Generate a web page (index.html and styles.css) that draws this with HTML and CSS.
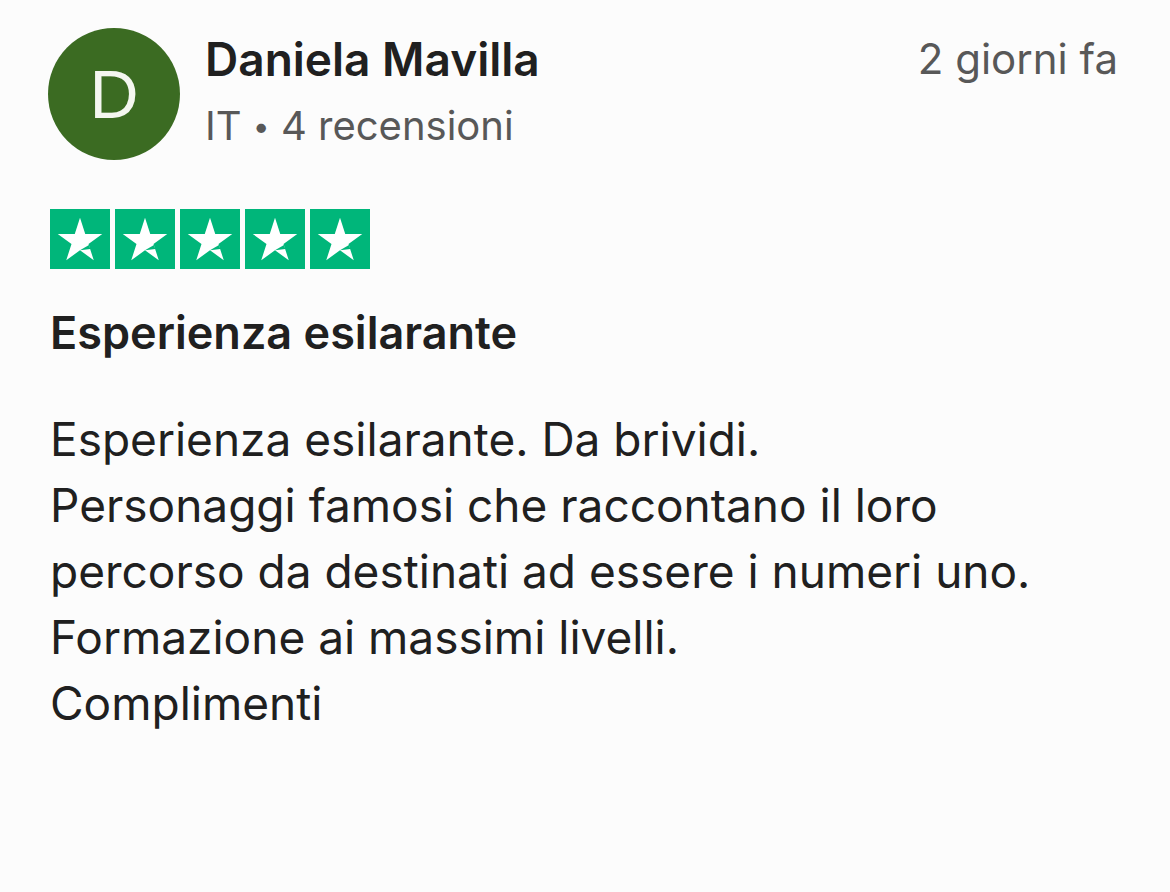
FILE: index.html
```html
<!DOCTYPE html>
<html lang="it">
<head>
    <meta charset="UTF-8">
    <title>Recensione</title>
    <link rel="stylesheet" href="styles.css">
</head>
<body>
    <!-- Review card -->
    <div class="review">
        <div class="review-head">
            <div class="avatar">D</div>
            <div class="author">
                <div class="author-name">Daniela Mavilla</div>
                <div class="author-meta">IT <span class="dot">&bull;</span> 4 recensioni</div>
            </div>
            <div class="date">2 giorni fa</div>
        </div>

        <!-- Stars -->
        <div class="stars">
            <span class="star"><svg viewBox="0 0 24 24"><path d="M12 3.5l2.1 6.5h6.8l-5.5 4 2.1 6.5L12 16.5l-5.5 4 2.1-6.5-5.5-4h6.8z" fill="#fff"/><path d="M15.6 14.4l.5 1.6-4.1 .5z" fill="#00b67a"/></svg></span>
            <span class="star"><svg viewBox="0 0 24 24"><path d="M12 3.5l2.1 6.5h6.8l-5.5 4 2.1 6.5L12 16.5l-5.5 4 2.1-6.5-5.5-4h6.8z" fill="#fff"/><path d="M15.6 14.4l.5 1.6-4.1 .5z" fill="#00b67a"/></svg></span>
            <span class="star"><svg viewBox="0 0 24 24"><path d="M12 3.5l2.1 6.5h6.8l-5.5 4 2.1 6.5L12 16.5l-5.5 4 2.1-6.5-5.5-4h6.8z" fill="#fff"/><path d="M15.6 14.4l.5 1.6-4.1 .5z" fill="#00b67a"/></svg></span>
            <span class="star"><svg viewBox="0 0 24 24"><path d="M12 3.5l2.1 6.5h6.8l-5.5 4 2.1 6.5L12 16.5l-5.5 4 2.1-6.5-5.5-4h6.8z" fill="#fff"/><path d="M15.6 14.4l.5 1.6-4.1 .5z" fill="#00b67a"/></svg></span>
            <span class="star"><svg viewBox="0 0 24 24"><path d="M12 3.5l2.1 6.5h6.8l-5.5 4 2.1 6.5L12 16.5l-5.5 4 2.1-6.5-5.5-4h6.8z" fill="#fff"/><path d="M15.6 14.4l.5 1.6-4.1 .5z" fill="#00b67a"/></svg></span>
        </div>

        <h3 class="review-title">Esperienza esilarante</h3>

        <p class="review-text">
            Esperienza esilarante. Da brividi.<br>
            Personaggi famosi che raccontano il loro<br>
            percorso da destinati ad essere i numeri uno.<br>
            Formazione ai massimi livelli.<br>
            Complimenti
        </p>
    </div>
</body>
</html>
```

FILE: styles.css
```css
/* General */
body {
    margin: 0;
    padding: 0;
    background-color: #fcfcfc;
    font-family: Inter, "Noto Sans", sans-serif;
    color: #202020;
}

.review {
    padding: 28px 52px 0 48px;
}

/* Header */
.review-head {
    display: flex;
    align-items: flex-start;
}

.avatar {
    width: 132px;
    height: 132px;
    border-radius: 50%;
    background-color: #3b6b22;
    color: #f4f7f0;
    font-family: "Liberation Sans", Arial, sans-serif;
    font-size: 68px;
    display: flex;
    align-items: center;
    justify-content: center;
    flex-shrink: 0;
}

.author {
    margin-left: 25px;
    flex: 1;
}

.author-name {
    font-size: 46px;
    font-weight: 600;
    line-height: 62px;
}

.author-meta {
    font-size: 40px;
    color: #585858;
    line-height: 72px;
}

.dot {
    font-size: 30px;
    vertical-align: 3px;
}

.date {
    font-size: 42px;
    color: #585858;
    line-height: 62px;
}

/* Stars */
.stars {
    display: flex;
    gap: 5px;
    margin-top: 47px;
    margin-left: 2px;
}

.star {
    width: 60px;
    height: 60px;
    background-color: #00b67a;
    display: flex;
}

.star svg {
    width: 60px;
    height: 60px;
}

/* Texts */
.review-title {
    margin: 34px 0 0 2px;
    font-size: 45px;
    font-weight: 600;
    line-height: 60px;
}

.review-text {
    margin: 43px 0 0 2px;
    font-size: 46px;
    line-height: 66px;
}
```
